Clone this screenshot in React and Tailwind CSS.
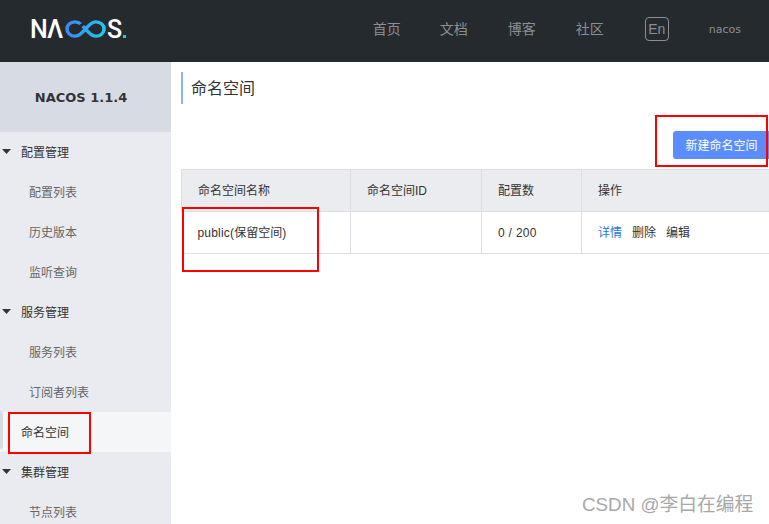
const cjk = "font-['Liberation_Sans','Noto_Sans_CJK_SC',sans-serif]";

const Logo = () => {
  return (
    <div className="flex items-center h-[20px] -ml-px text-white font-['Roboto',sans-serif] font-medium text-[25px] leading-none">
      <span className="w-[17px]">N</span>
      <span className="w-[18px]">Λ</span>
      <svg width="42" height="18" viewBox="0 0 43 20" fill="none" preserveAspectRatio="none">
        <defs>
          <linearGradient id="loop" x1="0" y1="0" x2="43" y2="0" gradientUnits="userSpaceOnUse">
            <stop offset="0" stopColor="#3f86f2" />
            <stop offset="1" stopColor="#1fcbea" />
          </linearGradient>
        </defs>
        <path
          d="M16 4.5C14.5 2.8 12.5 2 10.2 2 5.7 2 2 5.6 2 10s3.7 8 8.2 8c3.4 0 5.6-2 8-4.8l5.6-6.4C26.2 4 28.4 2 31.8 2 36.3 2 40 5.6 40 10s-3.7 8-8.2 8c-3.4 0-5.6-2-8-4.8l-5.6-6.4"
          stroke="url(#loop)"
          strokeWidth="3.6"
        />
      </svg>
      <span className="w-[16px]">S</span>
      <span className="w-[3px] h-[3px] mt-[15px] bg-[#1fcbea]"></span>
    </div>
  );
};

const Triangle = () => {
  return (
    <svg width="9" height="5" viewBox="0 0 9 5" className="absolute left-[2px] top-[17px]">
      <path d="M0 0h9L4.5 5z" fill="#333" />
    </svg>
  );
};

const MenuGroup = ({ label }) => {
  return (
    <div className="relative h-10 leading-[42px] pl-[21px] text-xs text-[#333]">
      <Triangle />
      {label}
    </div>
  );
};

const MenuItem = ({ label, active }) => {
  return (
    <div className={active ? "h-10 leading-[42px] pl-[21px] text-xs text-[#333] bg-[#f4f6f8]" : "h-10 leading-[42px] pl-[29px] text-xs text-[#666]"}>
      {label}
    </div>
  );
};

const App = () => {
  return (
    <div className={`relative flex flex-col w-[769px] h-[524px] overflow-hidden bg-white ${cjk}`}>
      <header className="flex items-center h-[62px] shrink-0 bg-[#252a2f] pb-1 pl-[31px] pr-[28px]">
        <Logo />
        <nav className="ml-auto flex items-center text-sm text-[#8c8f92]">
          <span className="mr-[39px]">首页</span>
          <span className="mr-[40px]">文档</span>
          <span className="mr-[40px]">博客</span>
          <span className="mr-[41px]">社区</span>
          <span className="flex items-center justify-center w-6 h-6 border border-[#8c8f92] rounded-sm mr-[40px]">En</span>
          <span className="mt-[2px] font-['DejaVu_Sans',sans-serif] text-[11px]">nacos</span>
        </nav>
      </header>

      <div className="flex flex-1 min-h-0">
        <aside className="w-[171px] shrink-0 bg-[#e9ebf0] overflow-hidden">
          <div className="flex items-center justify-center h-[70px] pt-px pr-[9px] bg-[#d7dce4] font-['DejaVu_Sans',sans-serif] font-bold text-[13px] text-[#333]">
            NACOS 1.1.4
          </div>
          <MenuGroup label="配置管理" />
          <MenuItem label="配置列表" />
          <MenuItem label="历史版本" />
          <MenuItem label="监听查询" />
          <MenuGroup label="服务管理" />
          <MenuItem label="服务列表" />
          <MenuItem label="订阅者列表" />
          <MenuItem label="命名空间" active />
          <MenuGroup label="集群管理" />
          <MenuItem label="节点列表" />
        </aside>

        <main className="flex-1 min-w-0 pl-[10px] pt-[10px]">
          <h1 className="h-8 leading-[34px] border-l-2 border-[#88b7e0] pl-2 text-base font-normal text-[#333]">命名空间</h1>
          <div className="flex justify-end mt-[27px]">
            <button className="w-24 h-7 pt-px pl-px bg-[#5c8dff] text-white text-xs rounded-l-[3px]">新建命名空间</button>
          </div>
          <table className="mt-[10px] w-[588px] table-fixed border-collapse text-xs text-[#333]">
            <thead>
              <tr className="h-[42px] bg-[#ebecf0] text-left">
                <th className="w-[169px] px-4 pt-px font-normal border border-[#dcdee3]">命名空间名称</th>
                <th className="w-[131px] px-4 pt-px font-normal border border-[#dcdee3]">命名空间ID</th>
                <th className="w-[100px] px-4 pt-px font-normal border border-[#dcdee3]">配置数</th>
                <th className="px-4 pt-px font-normal border-y border-l border-[#dcdee3]">操作</th>
              </tr>
            </thead>
            <tbody>
              <tr className="h-[42px]">
                <td className="px-4 pt-px border-y border-r border-[#dcdee3]">
                  <span className="tracking-[0.2px]">public(</span>保留空间)
                </td>
                <td className="px-4 pt-px border border-[#dcdee3]"></td>
                <td className="px-4 pt-px border border-[#dcdee3]">
                  <span className="tracking-[0.3px]">0 / 200</span>
                </td>
                <td className="px-4 pt-px border-y border-l border-[#dcdee3]">
                  <span className="text-[#2474e5] mr-[10px]">详情</span>
                  <span className="mr-[10px]">删除</span>
                  <span>编辑</span>
                </td>
              </tr>
            </tbody>
          </table>
        </main>
      </div>

      {/* sliver of the menu scroll handle at the left edge */}
      <div className="absolute left-0 top-[411px] w-[3px] h-[38px] rounded-r-sm bg-[#d7dce4]"></div>

      {/* red annotation boxes drawn over the page */}
      <div className="absolute left-[655px] top-[115px] w-[113px] h-[52px] border-2 border-[#ff0000]"></div>
      <div className="absolute left-[182px] top-[207px] w-[137px] h-[65px] border-2 border-[#ff0000]"></div>
      <div className="absolute left-[8px] top-[412px] w-[83px] h-[42px] border-2 border-[#ff0000]"></div>

      <div className="absolute left-[582px] top-[493px] text-[18.8px] leading-6 text-[#a8a8a8]">CSDN @李白在编程</div>
    </div>
  );
};

export default App;
